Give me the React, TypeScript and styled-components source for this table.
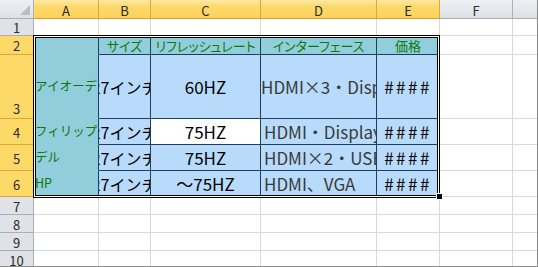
import React from "react";
import styled, { createGlobalStyle, css } from "styled-components";

const GlobalStyle = createGlobalStyle`
  html, body {
    margin: 0;
    padding: 0;
    background: #ffffff;
  }
  body {
    font-family: "Noto Sans CJK JP", "Noto Sans", sans-serif;
  }
`;

const GRID = "#d9d9d9";
const NAVY = "#1f3d5c";
const TEAL = "#92cddc";
const BLUE = "#b8dbfb";
const GREEN = "#0b7a0b";

type Align = "left" | "center";

type Row = {
  num: number;
  height: number;
  active: boolean;
  cells: CellData[];
};

type CellData = {
  text?: string;
  bg?: string;
  color?: string;
  align?: Align;
  size?: number;
  pad?: number;
  spacing?: number;
  palt?: boolean;
  line?: string;
  bottomLine?: string;
};

const columns = [
  { name: "A", width: 65, active: true },
  { name: "B", width: 52, active: true },
  { name: "C", width: 110, active: true },
  { name: "D", width: 116, active: true },
  { name: "E", width: 63, active: true },
  { name: "F", width: 73, active: false },
  { name: "G", width: 60, active: false },
];

const empty = (): CellData[] => columns.map(() => ({}));

const nameCell = (text: string): CellData => ({
  text,
  bg: TEAL,
  color: GREEN,
  size: 12.5,
  pad: 1,
  line: NAVY,
  bottomLine: TEAL,
});

const dataRow = (
  maker: string,
  rate: string,
  ports: string,
  opts: { white?: boolean; dPad?: number } = {},
): CellData[] => [
  nameCell(maker),
  { text: "27インチ", bg: BLUE, align: "center", size: 16, line: NAVY },
  {
    text: rate,
    bg: opts.white ? "#ffffff" : BLUE,
    align: "center",
    size: 17,
    line: NAVY,
  },
  {
    text: ports,
    bg: BLUE,
    color: "#3a3a3a",
    size: 17,
    pad: opts.dPad ?? 3,
    line: NAVY,
  },
  { text: "####", bg: BLUE, align: "center", size: 17, spacing: 2.5, line: NAVY },
  {},
  {},
];

const headCell = (text: string): CellData => ({
  text,
  bg: TEAL,
  color: GREEN,
  align: "center",
  size: 13,
  palt: true,
  line: NAVY,
});

const rows: Row[] = [
  { num: 1, height: 17, active: false, cells: empty() },
  {
    num: 2,
    height: 19,
    active: true,
    cells: [
      nameCell(""),
      headCell("サイズ"),
      headCell("リフレッシュレート"),
      headCell("インターフェース"),
      headCell("価格"),
      {},
      {},
    ],
  },
  {
    num: 3,
    height: 64,
    active: true,
    cells: dataRow("アイオーデータ", "60HZ", "HDMI×3・DisplayPort", { dPad: 0 }),
  },
  {
    num: 4,
    height: 26,
    active: true,
    cells: dataRow("フィリップス", "75HZ", "HDMI・DisplayPort", { white: true }),
  },
  {
    num: 5,
    height: 26,
    active: true,
    cells: dataRow("デル", "75HZ", "HDMI×2・USB Type-C"),
  },
  {
    num: 6,
    height: 26,
    active: true,
    cells: dataRow("HP", "～75HZ", "HDMI、VGA"),
  },
  { num: 7, height: 18, active: false, cells: empty() },
  { num: 8, height: 18, active: false, cells: empty() },
  { num: 9, height: 18, active: false, cells: empty() },
  { num: 10, height: 18, active: false, cells: empty() },
];

const App: React.FC = () => {
  return (
    <>
      <GlobalStyle />
      <Window>
        <Sheet
          $cols={columns.map((c) => `${c.width}px`).join(" ")}
          $rows={rows.map((r) => `${r.height}px`).join(" ")}
        >
          <Corner>
            <CornerMark />
          </Corner>
          {columns.map((c) => (
            <ColHead key={c.name} $active={c.active}>
              {c.name}
            </ColHead>
          ))}
          {rows.map((r) => (
            <React.Fragment key={r.num}>
              <RowHead $active={r.active} $tall={r.height > 40}>
                {r.num}
              </RowHead>
              {r.cells.map((cell, i) => (
                <Cell
                  key={i}
                  $bg={cell.bg}
                  $color={cell.color}
                  $align={cell.align ?? "left"}
                  $size={cell.size}
                  $pad={cell.pad}
                  $spacing={cell.spacing}
                  $palt={cell.palt}
                  $line={cell.line}
                  $bottomLine={cell.bottomLine}
                >
                  {cell.text && <span>{cell.text}</span>}
                </Cell>
              ))}
            </React.Fragment>
          ))}
        </Sheet>
        <Selection />
        <FillHandle />
      </Window>
    </>
  );
};

export default App;

const Window = styled.div`
  position: relative;
  width: 538px;
  height: 267px;
  box-sizing: border-box;
  overflow: hidden;
  border-right: 1px solid #8a8a8a;
  border-bottom: 1px solid #8a8a8a;
  background: #ffffff;
`;

const Sheet = styled.div<{ $cols: string; $rows: string }>`
  display: grid;
  grid-template-columns: 34px ${(p) => p.$cols};
  grid-template-rows: 19px ${(p) => p.$rows};
`;

const headBase = css`
  box-sizing: border-box;
  display: flex;
  justify-content: center;
  font-family: "Noto Sans CJK JP", "Noto Sans", sans-serif;
  font-size: 13px;
  color: #2b2b2b;
  line-height: 1;
`;

const Corner = styled.div`
  ${headBase};
  position: relative;
  background: linear-gradient(#eef0f3, #dde1e6);
  border-right: 1px solid #a9b0b8;
  border-bottom: 1px solid #a9b0b8;
`;

const CornerMark = styled.div`
  position: absolute;
  right: 3px;
  bottom: 3px;
  width: 0;
  height: 0;
  border-left: 10px solid transparent;
  border-bottom: 10px solid #b9bec5;
`;

const ColHead = styled.div<{ $active: boolean }>`
  ${headBase};
  align-items: center;
  padding-top: 2px;
  background: ${(p) =>
    p.$active
      ? "linear-gradient(#fdeaa8 0%, #fdd96c 35%, #fcd25a 100%)"
      : "linear-gradient(#eef0f3, #dde1e6)"};
  border-right: 1px solid ${(p) => (p.$active ? "#e2a43e" : "#a9b0b8")};
  border-bottom: 1px solid ${(p) => (p.$active ? "#e59a2f" : "#a9b0b8")};
`;

const RowHead = styled.div<{ $active: boolean; $tall: boolean }>`
  ${headBase};
  align-items: ${(p) => (p.$tall ? "flex-end" : "center")};
  padding-bottom: ${(p) => (p.$tall ? "3px" : "0")};
  padding-top: ${(p) => (p.$tall ? "0" : "1px")};
  background: ${(p) => (p.$active ? "#fdd968" : "#dfe2e7")};
  border-right: 1px solid ${(p) => (p.$active ? "#e59a2f" : "#a9b0b8")};
  border-bottom: 1px solid ${(p) => (p.$active ? "#e2a43e" : "#a9b0b8")};
`;

const Cell = styled.div<{
  $bg?: string;
  $color?: string;
  $align: Align;
  $size?: number;
  $pad?: number;
  $spacing?: number;
  $palt?: boolean;
  $line?: string;
  $bottomLine?: string;
}>`
  box-sizing: border-box;
  display: flex;
  align-items: center;
  justify-content: ${(p) => (p.$align === "center" ? "center" : "flex-start")};
  overflow: hidden;
  white-space: nowrap;
  padding-left: ${(p) => p.$pad ?? 0}px;
  background: ${(p) => p.$bg ?? "#ffffff"};
  color: ${(p) => p.$color ?? "#000000"};
  font-family: "Noto Sans CJK JP", "Noto Sans", sans-serif;
  font-size: ${(p) => p.$size ?? 13}px;
  letter-spacing: ${(p) => p.$spacing ?? 0}px;
  line-height: 1;
  font-feature-settings: ${(p) => (p.$palt ? '"palt"' : "normal")};
  border-right: 1px solid ${(p) => p.$line ?? GRID};
  border-bottom: 1px solid ${(p) => p.$bottomLine ?? p.$line ?? GRID};

  span {
    flex: none;
  }
`;

const Selection = styled.div`
  position: absolute;
  left: 33px;
  top: 35px;
  width: 407px;
  height: 163px;
  box-sizing: border-box;
  border: 1px solid #000000;
  box-shadow:
    inset 0 0 0 1px #ffffff,
    inset 0 0 0 2px #000000;
  pointer-events: none;
`;

const FillHandle = styled.div`
  position: absolute;
  left: 437px;
  top: 194px;
  width: 5px;
  height: 5px;
  box-sizing: border-box;
  background: #000000;
  outline: 1px solid #ffffff;
`;
